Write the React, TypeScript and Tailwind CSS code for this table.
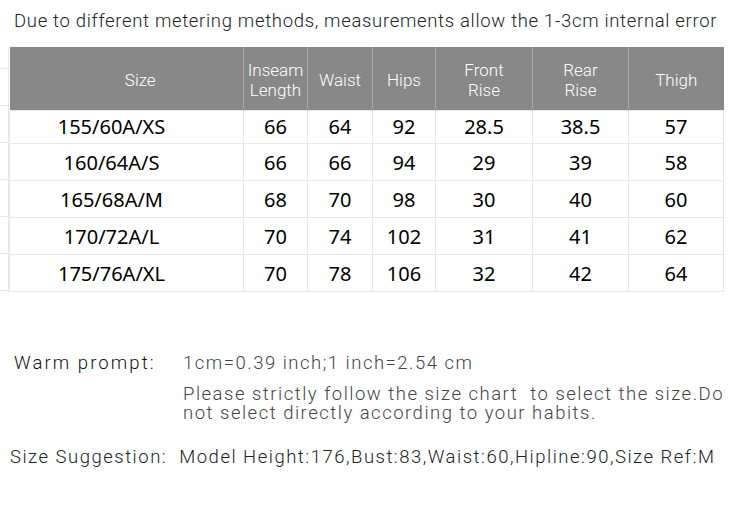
const head = [
  { label: "Size", w: "w-[234px] pl-[28px]" },
  { label: "Inseam\nLength", w: "w-[64px]" },
  { label: "Waist", w: "w-[65px]" },
  { label: "Hips", w: "w-[63px]" },
  { label: "Front\nRise", w: "w-[97px]" },
  { label: "Rear\nRise", w: "w-[96px]" },
  { label: "Thigh", w: "w-[95px]" },
];

const rows = [
  ["155/60A/XS", "66", "64", "92", "28.5", "38.5", "57"],
  ["160/64A/S", "66", "66", "94", "29", "39", "58"],
  ["165/68A/M", "68", "70", "98", "30", "40", "60"],
  ["170/72A/L", "70", "74", "102", "31", "41", "62"],
  ["175/76A/XL", "70", "78", "106", "32", "42", "64"],
];

const roboto = { fontFamily: "Roboto, 'Liberation Sans', sans-serif" };

export default function App() {
  return (
    <div className="h-[524px] w-[730px] bg-white" style={roboto}>
      <p className="pl-[14px] pt-[9px] text-[18.5px] font-light leading-[24px] tracking-[0.68px] text-[#222]">
        Due to different metering methods, measurements allow the 1-3cm internal error
      </p>

      <div className="mt-[14px] flex">
        {/* cut-off column from the chart on the left */}
        <div className="flex w-[9px] flex-col border-r border-[#e8e8e8]">
          <div className="h-[22px] border-b border-[#e8e8e8]" />
          {[0, 1, 2, 3, 4, 5].map((i) => (
            <div key={i} className="h-[37px] border-b border-[#e8e8e8]" />
          ))}
        </div>

        <table className="border-collapse">
          <thead>
            <tr className="h-[63px] bg-[#888888]">
              {head.map((h) => (
                <th
                  key={h.label}
                  className={`${h.w} whitespace-pre-line border-x border-[#a4a4a4] p-0 pt-[4px] text-[17px] font-light leading-[20px] text-white first:border-l-0 last:border-r-0`}
                >
                  {h.label}
                </th>
              ))}
            </tr>
          </thead>
          <tbody style={{ fontFamily: "'Noto Sans', 'DejaVu Sans', sans-serif" }}>
            {rows.map((r, ri) => (
              <tr key={r[0]} className={ri === 0 ? "h-[33px]" : "h-[37px]"}>
                {r.map((c, i) => (
                  <td
                    key={i}
                    className={`border border-[#e8e8e8] p-0 text-center text-[20px] leading-[22px] text-black ${
                      ri === 0 ? "" : "pt-[2px]"
                    } ${i === 0 ? "pr-[30px]" : ""}`}
                  >
                    {c}
                  </td>
                ))}
              </tr>
            ))}
          </tbody>
        </table>
      </div>

      <div className="mt-[62px] text-[18.5px] font-light leading-[19px]">
        <div className="flex">
          <span className="w-[183px] pl-[14px] tracking-[2.1px] text-[#111]">Warm prompt:</span>
          <div className="tracking-[1.5px] text-[#444]">
            <p>1cm=0.39 inch;1 inch=2.54 cm</p>
            <p className="mt-[12px] w-[545px]">
              Please strictly follow the size chart&nbsp; to select the size.Do not select directly according to your habits.
            </p>
          </div>
        </div>
        <p className="mt-[25px] pl-[10px] tracking-[1.5px] text-[#222]">
          Size Suggestion:&nbsp; Model Height:176,Bust:83,Waist:60,Hipline:90,Size Ref:M
        </p>
      </div>
    </div>
  );
}
